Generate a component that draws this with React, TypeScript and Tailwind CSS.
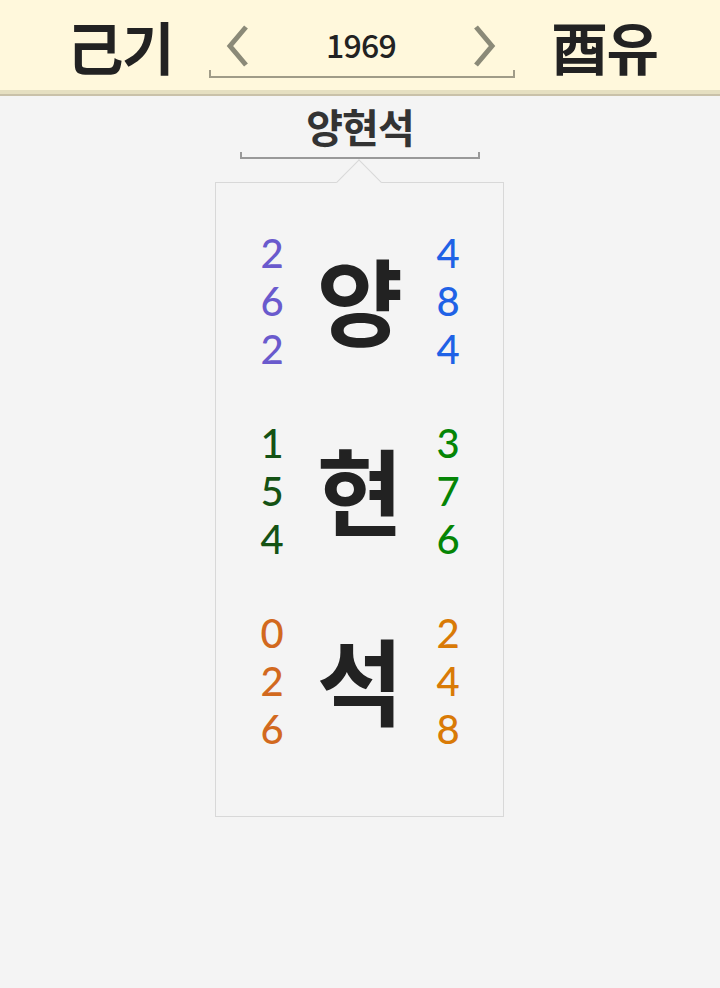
import React from "react";

// ─── Data ─────────────────────────────────────────────────────────────────────

interface NameRow {
  char: string;
  left: string[];
  right: string[];
  leftColor: string;
  rightColor: string;
}

const rows: NameRow[] = [
  { char: "양", left: ["2", "6", "2"], right: ["4", "8", "4"], leftColor: "text-[#6a5acd]", rightColor: "text-[#1f62e6]" },
  { char: "현", left: ["1", "5", "4"], right: ["3", "7", "6"], leftColor: "text-[#145214]", rightColor: "text-[#058505]" },
  { char: "석", left: ["0", "2", "6"], right: ["2", "4", "8"], leftColor: "text-[#d2691e]", rightColor: "text-[#d97a06]" },
];

const font = "font-['Noto_Sans_CJK_KR','Noto_Sans',sans-serif]";

// ─── Chevron ──────────────────────────────────────────────────────────────────

function Chevron({ dir }: { dir: "left" | "right" }) {
  return (
    <svg width="28" height="44" viewBox="0 0 28 44" className="shrink-0">
      <polyline
        points={dir === "left" ? "22,3 6,22 22,41" : "6,3 22,22 6,41"}
        fill="none"
        stroke="#8b8a78"
        strokeWidth="5"
      />
    </svg>
  );
}

// ─── Digits column ────────────────────────────────────────────────────────────

function Digits({ values, color }: { values: string[]; color: string }) {
  return (
    <div className={`flex flex-col items-center font-['Lato',sans-serif] ${color}`}>
      {values.map((v, i) => (
        <span key={i} className="block h-[48px] text-[40px] leading-[48px] font-medium">
          {v}
        </span>
      ))}
    </div>
  );
}

// ─── App ──────────────────────────────────────────────────────────────────────

export default function App() {
  return (
    <div className={`min-h-screen bg-[#f4f4f4] ${font}`}>
      {/* Header */}
      <header className="h-[96px] bg-[#fff8dc] border-b-[6px] border-[#e5dfc1] relative">
        <div className="h-[90px] flex items-center justify-center gap-9 pl-1">
          <div className="text-[57px] leading-none font-bold text-[#222] tracking-tight">己기</div>

          <div className="w-[306px] flex flex-col mt-[10px]">
            <div className="flex items-center justify-between pl-[15px] pr-[17px] h-[48px]">
              <Chevron dir="left" />
              <span className="text-[32px] leading-none font-medium text-[#222] tracking-tight -mt-[5px]">1969</span>
              <Chevron dir="right" />
            </div>
            <div className="h-[8px] border-x-2 border-b-2 border-[#a09c88]" />
          </div>

          <div className="text-[57px] leading-none font-bold text-[#222] tracking-tight">酉유</div>
        </div>
        <div className="h-[2px] bg-[#c9c1a9] absolute left-0 right-0 -bottom-[6px]" />
      </header>

      {/* Name */}
      <div className="flex flex-col items-center pt-[4px]">
        <div className="text-[40px] leading-[52px] font-bold text-[#333] tracking-tight">양현석</div>
        <div className="w-[240px] h-[7px] border-x-2 border-b-2 border-[#999]" />
      </div>

      {/* Card */}
      <div className="flex justify-center pt-[23px] pr-[2px]">
        <div className="relative w-[289px] h-[635px] border border-[#d8d8d8] bg-[#f4f4f4] pt-[46px]">
          <div className="absolute left-1/2 -top-[17px] -ml-4 w-8 h-8 rotate-45 bg-[#f4f4f4] border-t border-l border-[#d8d8d8]" />
          <div className="flex flex-col gap-[46px]">
            {rows.map((r) => (
              <div key={r.char} className="grid grid-cols-[40px_136px_40px] justify-center items-center pl-[2px]">
                <Digits values={r.left} color={r.leftColor} />
                <div className="text-center text-[94px] leading-none font-bold text-[#222] -mt-[6px]">{r.char}</div>
                <Digits values={r.right} color={r.rightColor} />
              </div>
            ))}
          </div>
        </div>
      </div>
    </div>
  );
}
